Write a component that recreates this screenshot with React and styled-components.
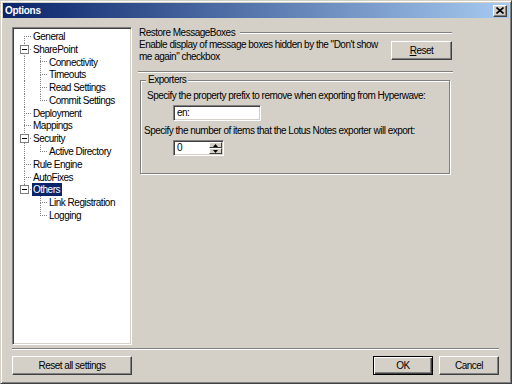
import React from "react";
import styled, { createGlobalStyle } from "styled-components";

const FONT = `"Liberation Sans", Arial, sans-serif`;

const GlobalStyle = createGlobalStyle`
  html, body {
    margin: 0;
    padding: 0;
    background: #d4d0c8;
  }
  body {
    font-family: ${FONT};
    font-size: 10px;
    letter-spacing: -0.5px;
    color: #000;
  }
`;

const Window = styled.div`
  box-sizing: border-box;
  width: 512px;
  height: 384px;
  background: #d4d0c8;
  border: 1px solid;
  border-color: #d4d0c8 #404040 #404040 #d4d0c8;
  box-shadow: inset 1px 1px #fff, inset -1px -1px #808080;
  padding: 2px;
  display: flex;
  flex-direction: column;
`;

const TitleBar = styled.div`
  flex: none;
  height: 15px;
  display: flex;
  align-items: center;
  justify-content: space-between;
  padding: 0 2px 0 2px;
  background: linear-gradient(to right, #0a246a, #a6caf0);
`;

const Title = styled.span`
  color: #fff;
  font-weight: bold;
  font-size: 10px;
  letter-spacing: -0.3px;
  line-height: 15px;
`;

const CloseBtn = styled.div`
  box-sizing: border-box;
  width: 14px;
  height: 12px;
  display: flex;
  align-items: center;
  justify-content: center;
  background: #d4d0c8;
  border: 1px solid;
  border-color: #fff #404040 #404040 #fff;
  box-shadow: inset -1px -1px #808080;
`;

const Body = styled.div`
  flex: 1;
  display: flex;
  flex-direction: column;
  padding: 9px 10px 6px 9px;
`;

const MainRow = styled.div`
  display: flex;
  gap: 7px;
`;

const Sunken = styled.div`
  box-sizing: border-box;
  background: #fff;
  border: 1px solid;
  border-color: #808080 #fff #fff #808080;
  box-shadow: inset 1px 1px #404040, inset -1px -1px #d4d0c8;
`;

const Tree = styled(Sunken)`
  flex: none;
  width: 120px;
  height: 318px;
  padding: 2px 0 0 3px;
`;

const V = "repeating-linear-gradient(to bottom, #808080 0 1px, transparent 1px 2px)";
const H = "repeating-linear-gradient(to right, #808080 0 1px, transparent 1px 2px)";

const lineLayers = ({ $pass, $up, $down, $h }) => {
  const imgs = [];
  const pos = [];
  const size = [];
  if ($pass) {
    imgs.push(V);
    pos.push("8px 0");
    size.push("1px 100%");
  }
  if ($up) {
    imgs.push(V);
    pos.push("8px 0");
    size.push("1px 50%");
  }
  if ($down) {
    imgs.push(V);
    pos.push("8px 100%");
    size.push("1px 50%");
  }
  if ($h) {
    imgs.push(H);
    pos.push("8px 50%");
    size.push("7px 1px");
  }
  if (!imgs.length) return "background: none;";
  return `background-image: ${imgs.join(",")}; background-position: ${pos.join(
    ","
  )}; background-size: ${size.join(",")}; background-repeat: no-repeat;`;
};

const TreeRow = styled.div`
  display: flex;
  align-items: center;
  height: 12.8px;
`;

const Gutter = styled.span`
  flex: none;
  width: 16px;
  align-self: stretch;
  display: flex;
  align-items: center;
  ${(p) => lineLayers(p)}
`;

const Expander = styled.span`
  box-sizing: border-box;
  width: 9px;
  height: 9px;
  margin-left: 4px;
  border: 1px solid #808080;
  background: linear-gradient(#000, #000) center / 5px 1px no-repeat, #fff;
`;

const TreeLabel = styled.span`
  padding: 0 2px 0 1px;
  line-height: 13px;
  white-space: nowrap;
  background: ${(p) => (p.$selected ? "#0a246a" : "transparent")};
  color: ${(p) => (p.$selected ? "#fff" : "#000")};
`;

const RightPanel = styled.div`
  flex: none;
  width: 314px;
  display: flex;
  flex-direction: column;
`;

const SectionHeader = styled.div`
  display: flex;
  align-items: center;
  gap: 5px;
  height: 12px;
  line-height: 12px;
  &::after {
    content: "";
    flex: 1;
    height: 0;
    border-top: 1px solid #808080;
    border-bottom: 1px solid #fff;
    margin-right: 1px;
  }
`;

const DescRow = styled.div`
  display: flex;
  justify-content: space-between;
  align-items: flex-start;
`;

const Desc = styled.div`
  line-height: 12px;
  white-space: nowrap;
`;

const Button = styled.div`
  box-sizing: border-box;
  flex: none;
  width: ${(p) => p.$w}px;
  height: 19px;
  display: flex;
  align-items: center;
  justify-content: center;
  background: #d4d0c8;
  border: 1px solid;
  border-color: ${(p) => (p.$default ? "#000" : "#fff #404040 #404040 #fff")};
  box-shadow: ${(p) =>
    p.$default
      ? "inset 1px 1px #fff, inset -1px -1px #404040, inset -2px -2px #808080"
      : "inset -1px -1px #808080"};
  margin-top: ${(p) => p.$mt || 0}px;
  margin-right: ${(p) => p.$mr || 0}px;
`;

const Etched = styled.div`
  height: 0;
  border-top: 1px solid #808080;
  border-bottom: 1px solid #fff;
  margin: ${(p) => p.$m};
`;

const GroupBox = styled.div`
  position: relative;
  box-sizing: border-box;
  width: 310px;
  height: 94px;
  margin: 7px 0 0 1px;
  border: 1px solid #808080;
  box-shadow: inset 1px 1px #fff, 1px 1px #fff;
  padding: 9px 0 0 1px;
  display: flex;
  flex-direction: column;
  align-items: flex-start;
`;

const GroupLabel = styled.span`
  position: absolute;
  top: -7px;
  left: 5px;
  padding: 0 2px;
  line-height: 12px;
  background: #d4d0c8;
`;

const FieldText = styled.div`
  line-height: 12px;
  margin-left: ${(p) => p.$ml}px;
  margin-top: ${(p) => p.$mt || 0}px;
  white-space: nowrap;
`;

const TextBox = styled(Sunken)`
  width: ${(p) => p.$w}px;
  height: 16px;
  margin: ${(p) => p.$mt}px 0 0 31px;
  display: flex;
  align-items: center;
  padding: 0 2px 0 3px;
  line-height: 12px;
`;

const SpinValue = styled.span`
  flex: 1;
`;

const SpinButtons = styled.div`
  display: flex;
  flex-direction: column;
  margin-right: -1px;
`;

const SpinBtn = styled.div`
  box-sizing: border-box;
  width: 13px;
  height: 6px;
  display: flex;
  align-items: center;
  justify-content: center;
  background: #d4d0c8;
  border: 1px solid;
  border-color: #fff #404040 #404040 #fff;
`;

const Footer = styled.div`
  display: flex;
  align-items: center;
  gap: 6px;
  margin-top: 6px;
`;

const Spacer = styled.div`
  flex: 1;
`;

const treeItems = [
  { label: "General", level: 0, first: true },
  { label: "SharePoint", level: 0, open: true },
  { label: "Connectivity", level: 1, pass: true },
  { label: "Timeouts", level: 1, pass: true },
  { label: "Read Settings", level: 1, pass: true },
  { label: "Commit Settings", level: 1, pass: true, last: true },
  { label: "Deployment", level: 0 },
  { label: "Mappings", level: 0 },
  { label: "Security", level: 0, open: true },
  { label: "Active Directory", level: 1, pass: true, last: true },
  { label: "Rule Engine", level: 0 },
  { label: "AutoFixes", level: 0 },
  { label: "Others", level: 0, open: true, last: true, selected: true },
  { label: "Link Registration", level: 1 },
  { label: "Logging", level: 1, last: true },
];

const TreeItem = ({ item }) => (
  <TreeRow>
    {item.level === 1 && <Gutter $pass={item.pass} />}
    <Gutter $up={!item.first} $down={!item.last} $h>
      {item.open && <Expander />}
    </Gutter>
    <TreeLabel $selected={item.selected}>{item.label}</TreeLabel>
  </TreeRow>
);

const Arrow = ({ up }) => (
  <svg width="5" height="3" viewBox="0 0 5 3">
    <polygon points={up ? "2.5,0 5,3 0,3" : "0,0 5,0 2.5,3"} fill="#000" />
  </svg>
);

export default function App() {
  return (
    <>
      <GlobalStyle />
      <Window>
        <TitleBar>
          <Title>Options</Title>
          <CloseBtn>
            <svg width="8" height="7" viewBox="0 0 8 7">
              <path d="M0.5 0.5 L7.5 6.5 M7.5 0.5 L0.5 6.5" stroke="#000" strokeWidth="1.6" />
            </svg>
          </CloseBtn>
        </TitleBar>
        <Body>
          <MainRow>
            <Tree>
              {treeItems.map((item) => (
                <TreeItem key={item.label} item={item} />
              ))}
            </Tree>
            <RightPanel>
              <SectionHeader>Restore MessageBoxes</SectionHeader>
              <DescRow>
                <Desc>
                  Enable display of message boxes hidden by the &quot;Don't show
                  <br />
                  me again&quot; checkbox
                </Desc>
                <Button $w={61} $mt={2} $mr={1}>
                  <span>
                    <u>R</u>eset
                  </span>
                </Button>
              </DescRow>
              <Etched $m="8px 0 0 -1px" />
              <GroupBox>
                <GroupLabel>Exporters</GroupLabel>
                <FieldText $ml={5}>
                  Specify the property prefix to remove when exporting from Hyperwave:
                </FieldText>
                <TextBox $w={88} $mt={3}>
                  en:
                </TextBox>
                <FieldText $ml={2} $mt={4}>
                  Specify the number of items that the Lotus Notes exporter will export:
                </FieldText>
                <TextBox $w={51} $mt={3}>
                  <SpinValue>0</SpinValue>
                  <SpinButtons>
                    <SpinBtn>
                      <Arrow up />
                    </SpinBtn>
                    <SpinBtn>
                      <Arrow />
                    </SpinBtn>
                  </SpinButtons>
                </TextBox>
              </GroupBox>
            </RightPanel>
          </MainRow>
          <Etched $m="3px 0 0 0" />
          <Footer>
            <Button $w={120}>Reset all settings</Button>
            <Spacer />
            <Button $w={60} $default>
              OK
            </Button>
            <Button $w={60}>Cancel</Button>
          </Footer>
        </Body>
      </Window>
    </>
  );
}
